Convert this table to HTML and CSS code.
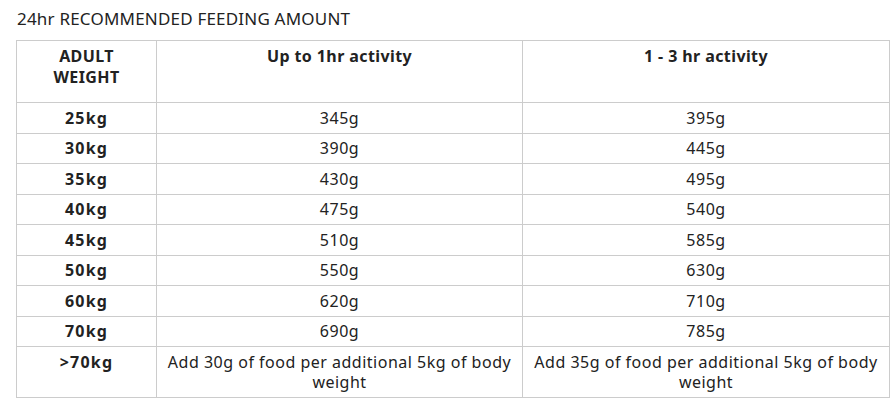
FILE: index.html
```html
<!DOCTYPE html>
<html>
<head>
<meta charset="utf-8">
<link rel="stylesheet" href="styles.css">
</head>
<body>
<div class="wrap">
  <h3 class="title">24hr RECOMMENDED FEEDING AMOUNT</h3>
  <table class="feed">
    <colgroup><col class="c1"><col class="c2"><col class="c3"></colgroup>
    <thead>
      <tr class="head"><th>ADULT<br>WEIGHT</th><th>Up to 1hr activity</th><th>1 - 3 hr activity</th></tr>
    </thead>
    <tbody>
      <tr><th>25kg</th><td>345g</td><td>395g</td></tr>
      <tr><th>30kg</th><td>390g</td><td>445g</td></tr>
      <tr><th>35kg</th><td>430g</td><td>495g</td></tr>
      <tr><th>40kg</th><td>475g</td><td>540g</td></tr>
      <tr><th>45kg</th><td>510g</td><td>585g</td></tr>
      <tr><th>50kg</th><td>550g</td><td>630g</td></tr>
      <tr><th>60kg</th><td>620g</td><td>710g</td></tr>
      <tr><th>70kg</th><td>690g</td><td>785g</td></tr>
      <tr><th>&gt;70kg</th><td>Add 30g of food per additional 5kg of body weight</td><td>Add 35g of food per additional 5kg of body weight</td></tr>
    </tbody>
  </table>
</div>
</body>
</html>
```
FILE: styles.css
```css
html, body { margin: 0; padding: 0; background: #fff; }
body { font-family: "Noto Sans", "Open Sans", sans-serif; color: #222; }
.wrap { padding: 8px 6px 0 16px; }
.title { margin: 0 0 0 1px; font-size: 17px; font-weight: 400; letter-spacing: 0.2px; line-height: 22px; height: 32px; }
.feed { border-collapse: collapse; width: 873px; table-layout: fixed; font-size: 16px; line-height: 20.5px; letter-spacing: 0.5px; }
.c1 { width: 140px; }
.c2 { width: 366px; }
.c3 { width: 367px; }
.feed th, .feed td { border: 1px solid #cccccc; padding: 4.5px 5px; text-align: center; vertical-align: top; }
.feed th { font-weight: 700; letter-spacing: 0.4px; }
.feed td { font-weight: 400; }
.feed tbody th { letter-spacing: 1.2px; }
.head th { padding-top: 5px; padding-bottom: 15px; }
```
